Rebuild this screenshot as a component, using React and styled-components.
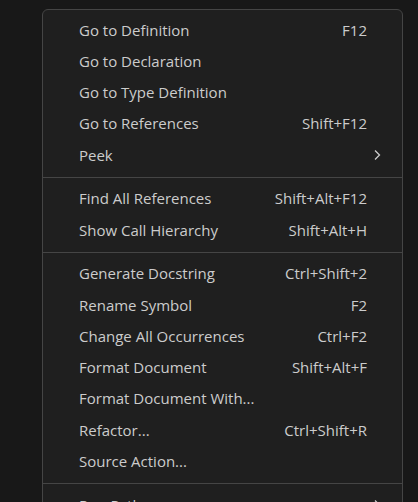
import React from 'react';
import styled, { createGlobalStyle } from 'styled-components';

const GlobalStyle = createGlobalStyle`
  html, body {
    margin: 0;
    padding: 0;
    background: #181818;
    overflow: hidden;
  }
  body {
    font-family: "Open Sans", "Noto Sans", sans-serif;
  }
`;

const groups = [
  [
    { label: 'Go to Definition', keys: 'F12' },
    { label: 'Go to Declaration' },
    { label: 'Go to Type Definition' },
    { label: 'Go to References', keys: 'Shift+F12' },
    { label: 'Peek', submenu: true },
  ],
  [
    { label: 'Find All References', keys: 'Shift+Alt+F12' },
    { label: 'Show Call Hierarchy', keys: 'Shift+Alt+H' },
  ],
  [
    { label: 'Generate Docstring', keys: 'Ctrl+Shift+2' },
    { label: 'Rename Symbol', keys: 'F2' },
    { label: 'Change All Occurrences', keys: 'Ctrl+F2' },
    { label: 'Format Document', keys: 'Shift+Alt+F' },
    { label: 'Format Document With...' },
    { label: 'Refactor...', keys: 'Ctrl+Shift+R' },
    { label: 'Source Action...' },
  ],
  [
    { label: 'Run Python', submenu: true },
    { label: 'Cut', keys: 'Ctrl+X' },
  ],
];

const Chevron = () => (
  <svg width="8" height="12" viewBox="0 0 8 12">
    <polyline points="2,1.5 6.5,6 2,10.5" fill="none" stroke="#cccccc" strokeWidth="1.3" />
  </svg>
);

const ContextMenu = () => (
  <Page>
    <GlobalStyle />
    <Menu>
      {groups.map((group, i) => (
        <React.Fragment key={i}>
          {i > 0 && <Separator />}
          {group.map((item) => (
            <Item key={item.label}>
              <Label>{item.label}</Label>
              {item.keys && <Keys>{item.keys}</Keys>}
              {item.submenu && (
                <SubmenuArrow>
                  <Chevron />
                </SubmenuArrow>
              )}
            </Item>
          ))}
        </React.Fragment>
      ))}
    </Menu>
  </Page>
);

const Page = styled.div`
  height: 502px;
  padding: 9px 15px 0 42px;
  box-sizing: border-box;
`;

const Menu = styled.div`
  width: 361px;
  box-sizing: border-box;
  background: #1f1f1f;
  border: 1px solid #454545;
  border-radius: 6px;
  padding: 5px 0;
`;

const Item = styled.div`
  position: relative;
  display: flex;
  align-items: center;
  justify-content: space-between;
  height: 31.25px;
  box-sizing: border-box;
  padding: 0 35px 2px 36px;
  color: #cccccc;
  font-size: 15px;
  cursor: default;
`;

const Label = styled.span`
  white-space: nowrap;
`;

const Keys = styled.span`
  white-space: nowrap;
`;

const SubmenuArrow = styled.span`
  position: absolute;
  right: 21px;
  top: 50%;
  transform: translateY(-50%);
  display: flex;
  margin-top: -1px;
`;

const Separator = styled.div`
  height: 12.5px;
  display: flex;
  align-items: center;

  &::before {
    content: '';
    flex: 1;
    height: 1px;
    background: #454545;
  }
`;

export default ContextMenu;
